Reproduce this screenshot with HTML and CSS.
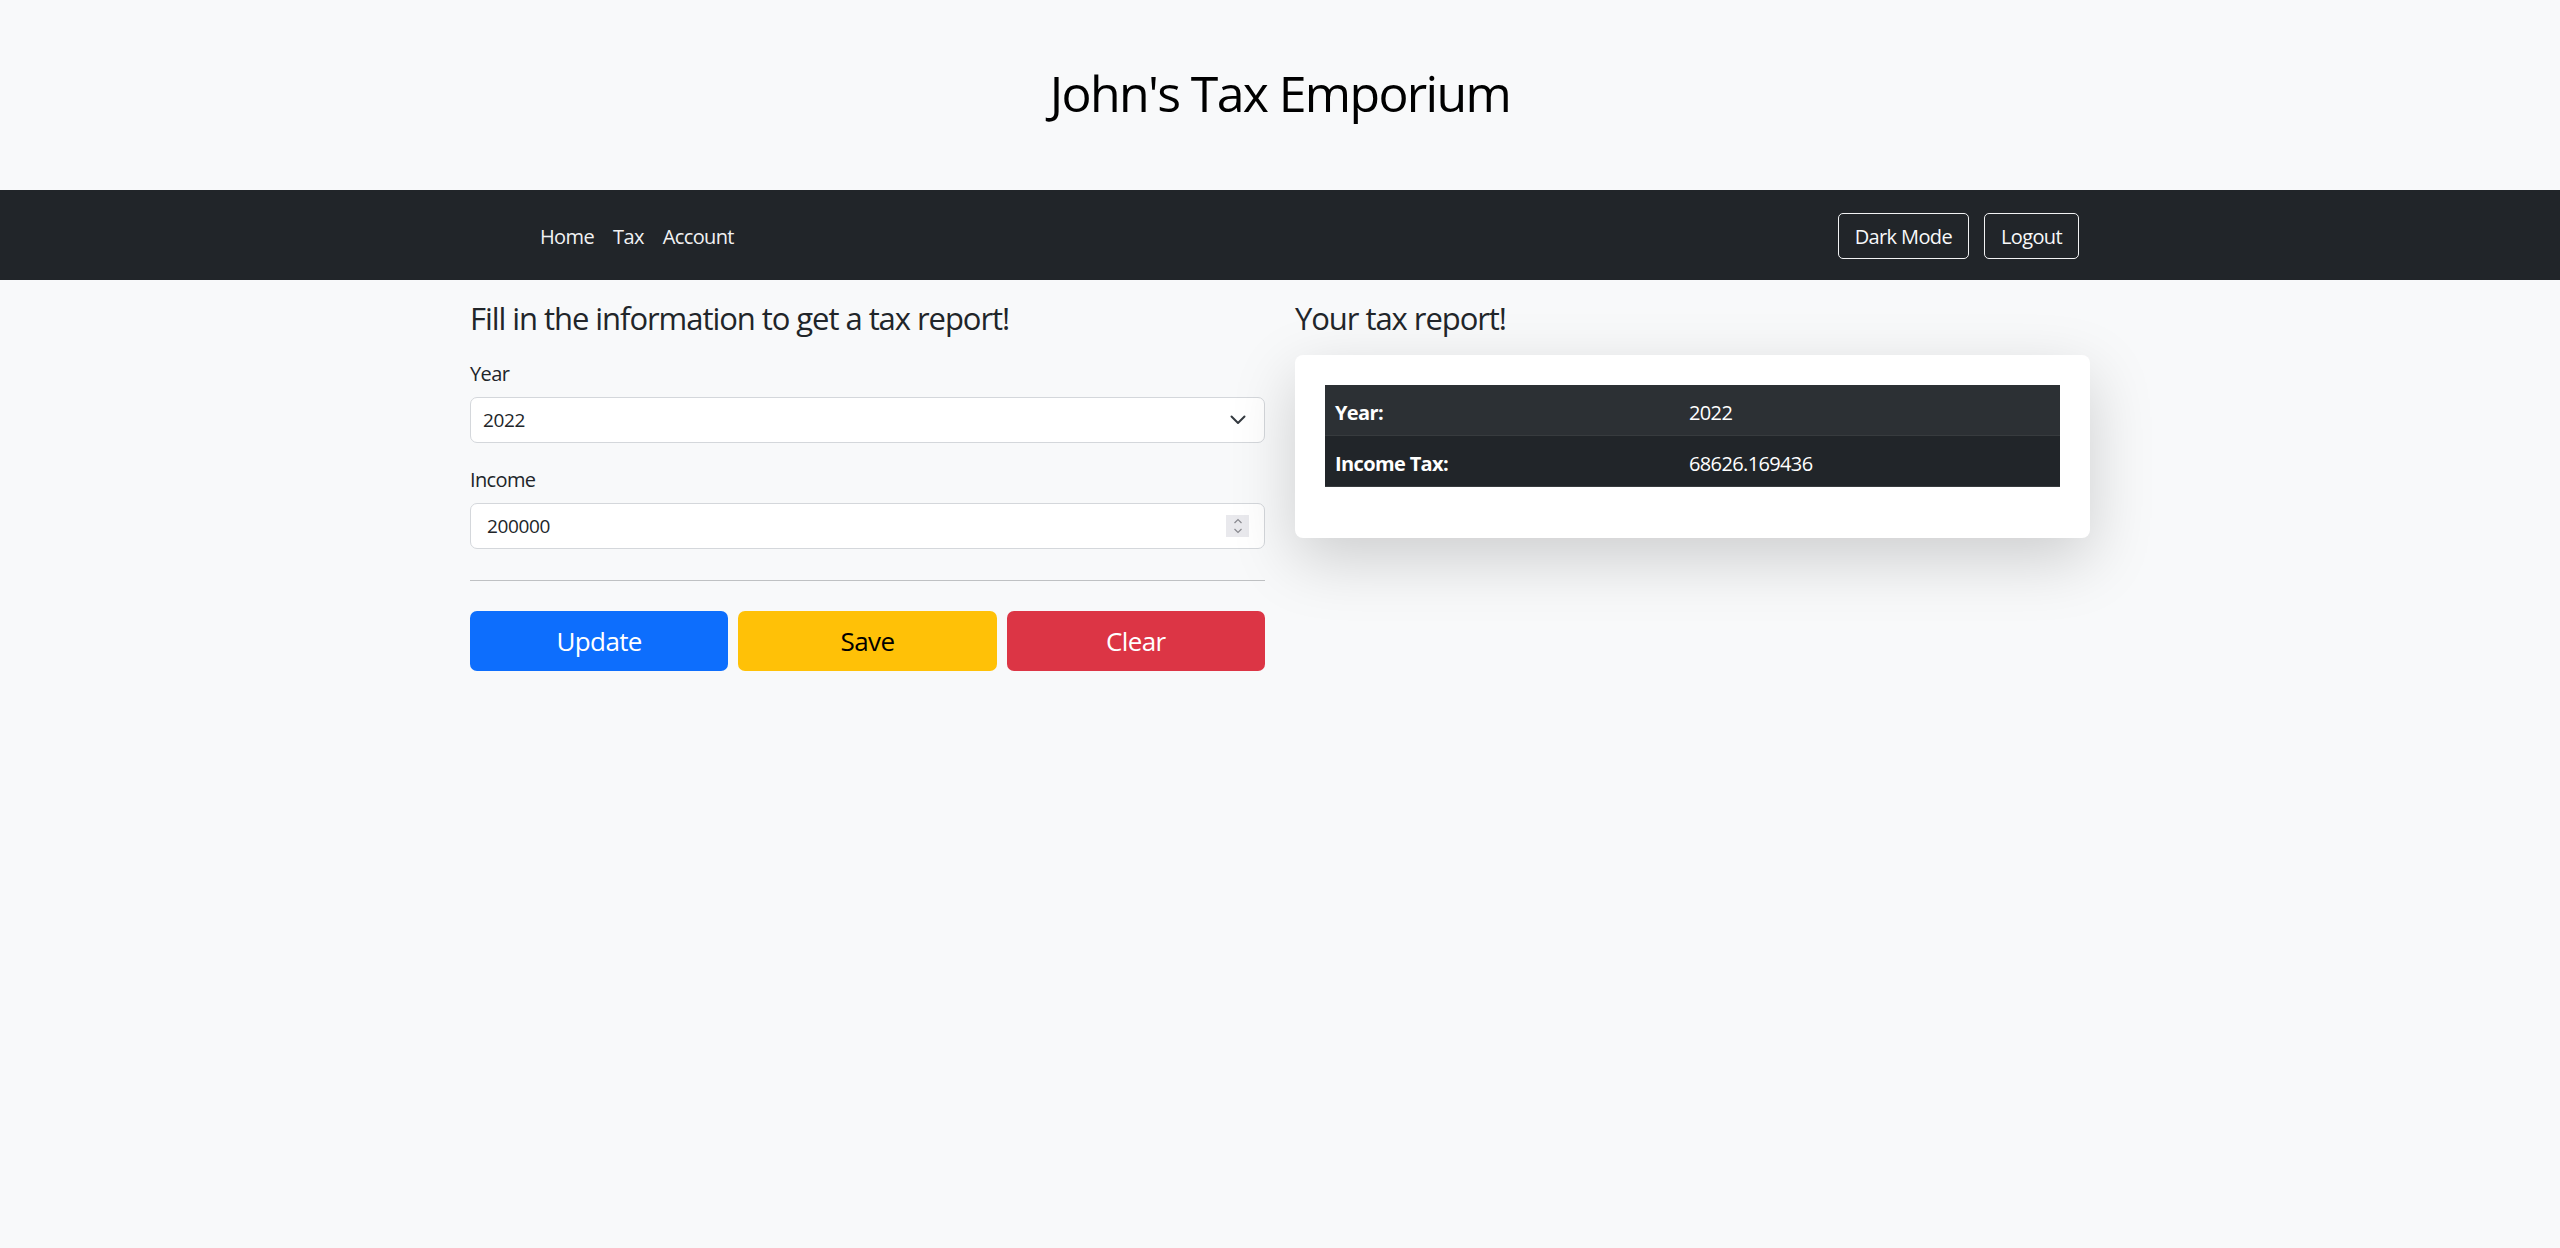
FILE: index.html
```html
<!DOCTYPE html>
<html lang="en">
<head>
<meta charset="utf-8">
<title>John's Tax Emporium</title>
<link rel="stylesheet" href="styles.css">
</head>
<body>
<header class="site-header">
  <h1 class="site-title">John's Tax Emporium</h1>
</header>
<nav class="navbar">
  <div class="container nav-inner">
    <ul class="nav-links">
      <li><a href="#" class="nav-link">Home</a></li>
      <li><a href="#" class="nav-link">Tax</a></li>
      <li><a href="#" class="nav-link">Account</a></li>
    </ul>
    <div class="nav-actions">
      <button class="btn-outline">Dark Mode</button>
      <button class="btn-outline">Logout</button>
    </div>
  </div>
</nav>
<main class="container main-grid">
  <section class="form-col">
    <h4 class="section-title">Fill in the information to get a tax report!</h4>
    <label class="form-label">Year</label>
    <div class="form-select">
      <span>2022</span>
      <svg class="chevron" width="16" height="10" viewBox="0 0 16 10"><path d="M1.5 1.5 L8 8 L14.5 1.5" fill="none" stroke="#343a40" stroke-width="2" stroke-linecap="round" stroke-linejoin="round"/></svg>
    </div>
    <label class="form-label income-label">Income</label>
    <div class="form-input">
      <span>200000</span>
      <span class="spinner">
        <svg width="10" height="18" viewBox="0 0 10 18"><path d="M1.5 6 L5 2.5 L8.5 6" fill="none" stroke="#8a8a90" stroke-width="1.2"/><path d="M1.5 12 L5 15.5 L8.5 12" fill="none" stroke="#8a8a90" stroke-width="1.2"/></svg>
      </span>
    </div>
    <hr class="divider">
    <div class="btn-row">
      <button class="btn btn-primary">Update</button>
      <button class="btn btn-warning">Save</button>
      <button class="btn btn-danger">Clear</button>
    </div>
  </section>
  <section class="report-col">
    <h4 class="section-title">Your tax report!</h4>
    <div class="card">
      <table class="report-table">
        <tbody>
          <tr class="row-striped"><th>Year:</th><td>2022</td></tr>
          <tr><th>Income Tax:</th><td>68626.169436</td></tr>
        </tbody>
      </table>
    </div>
  </section>
</main>
</body>
</html>
```
FILE: styles.css
```css
* { box-sizing: border-box; }
html, body { margin: 0; padding: 0; }
body {
  background: #f8f9fa;
  color: #212529;
  font-family: "Open Sans", "Noto Sans", sans-serif;
  font-size: 21px;
  line-height: 1.5;
  letter-spacing: -0.03em;
}
.container {
  width: 1620px;
  margin: 0 auto;
}
.site-header {
  height: 190px;
  display: flex;
  align-items: center;
  justify-content: center;
}
.site-title {
  margin: 0;
  font-size: 50px;
  font-weight: 400;
  line-height: 1.2;
  letter-spacing: -0.033em;
  color: #000;
  padding-bottom: 4px;
}
.navbar {
  background: #212529;
  height: 90px;
}
.nav-inner {
  height: 100%;
  display: flex;
  align-items: center;
  justify-content: space-between;
  padding-left: 70px;
  padding-right: 11px;
}
.nav-links {
  list-style: none;
  margin: 0;
  padding: 4px 0 0;
  display: flex;
  gap: 19px;
}
.nav-link {
  color: #f1f2f3;
  text-decoration: none;
  font-size: 20px;
}
.nav-actions {
  display: flex;
  gap: 15px;
  padding-top: 2px;
}
.btn-outline {
  font-family: inherit;
  letter-spacing: inherit;
  font-size: 20px;
  background: transparent;
  color: #f8f9fa;
  border: 1.5px solid #f1f2f3;
  border-radius: 5px;
  height: 46px;
  padding: 0 16px;
}
.main-grid {
  display: grid;
  grid-template-columns: 795px 795px;
  column-gap: 30px;
  padding-top: 19px;
}
.section-title {
  margin: 0;
  font-size: 31px;
  font-weight: 400;
  line-height: 38px;
  letter-spacing: -0.034em;
}
.form-label {
  display: block;
  margin-top: 21px;
  height: 32px;
  line-height: 32px;
  font-size: 20px;
}
.income-label { margin-top: 21px; }
.form-select, .form-input {
  margin-top: 7px;
  height: 46px;
  background: #fff;
  border: 1px solid #d4d7db;
  border-radius: 7px;
  display: flex;
  align-items: center;
  justify-content: space-between;
  font-size: 19px;
  letter-spacing: -0.02em;
}
.form-select { padding: 0 18px 0 12px; }
.form-input { padding: 0 15px 0 16px; }
.chevron { display: block; }
.spinner {
  width: 23px;
  height: 22px;
  background: #e9e9ed;
  display: flex;
  align-items: center;
  justify-content: center;
}
.divider {
  margin: 31px 0 0;
  border: 0;
  border-top: 1.5px solid #bfc1c3;
  height: 0;
}
.btn-row {
  margin-top: 30px;
  display: grid;
  grid-template-columns: repeat(3, 1fr);
  column-gap: 10px;
}
.btn {
  font-family: inherit;
  letter-spacing: inherit;
  font-size: 26px;
  height: 60px;
  border: 0;
  border-radius: 7px;
}
.btn-primary { background: #0d6efd; color: #fff; }
.btn-warning { background: #ffc107; color: #000; }
.btn-danger { background: #dc3545; color: #fff; }
.card {
  margin-top: 18px;
  background: #fff;
  border-radius: 8px;
  padding: 30px 30px 51px;
  box-shadow: 0 21px 64px rgba(0, 0, 0, 0.175);
}
.report-table {
  width: 100%;
  border-collapse: collapse;
  color: #fff;
  background: #212529;
  font-size: 20px;
}
.report-table th, .report-table td {
  text-align: left;
  padding: 12px 10px 7px;
  line-height: 31px;
  border-bottom: 1px solid #373b3e;
}
.report-table th {
  width: 354px;
  font-weight: 700;
}
.report-table td { font-weight: 400; }
.row-striped { background: #2c3034; }
```
